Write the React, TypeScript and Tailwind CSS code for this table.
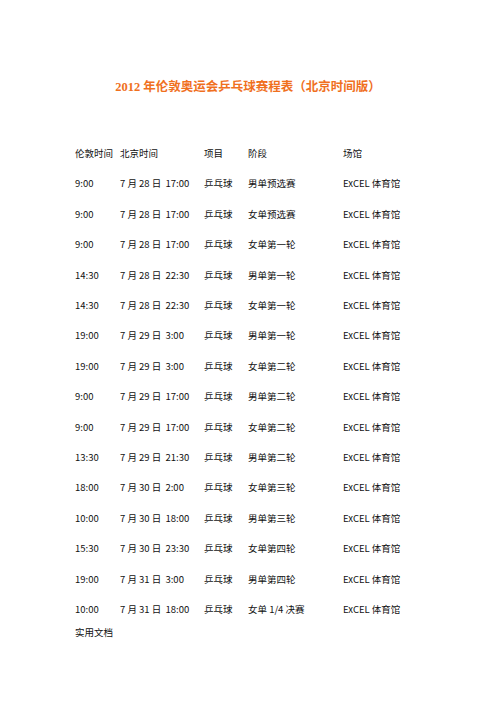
const rows = [
  ['9:00', '7 月 28 日  17:00', '乒乓球', '男单预选赛', 'ExCEL 体育馆'],
  ['9:00', '7 月 28 日  17:00', '乒乓球', '女单预选赛', 'ExCEL 体育馆'],
  ['9:00', '7 月 28 日  17:00', '乒乓球', '女单第一轮', 'ExCEL 体育馆'],
  ['14:30', '7 月 28 日  22:30', '乒乓球', '男单第一轮', 'ExCEL 体育馆'],
  ['14:30', '7 月 28 日  22:30', '乒乓球', '女单第一轮', 'ExCEL 体育馆'],
  ['19:00', '7 月 29 日  3:00', '乒乓球', '男单第一轮', 'ExCEL 体育馆'],
  ['19:00', '7 月 29 日  3:00', '乒乓球', '女单第二轮', 'ExCEL 体育馆'],
  ['9:00', '7 月 29 日  17:00', '乒乓球', '男单第二轮', 'ExCEL 体育馆'],
  ['9:00', '7 月 29 日  17:00', '乒乓球', '女单第二轮', 'ExCEL 体育馆'],
  ['13:30', '7 月 29 日  21:30', '乒乓球', '男单第二轮', 'ExCEL 体育馆'],
  ['18:00', '7 月 30 日  2:00', '乒乓球', '女单第三轮', 'ExCEL 体育馆'],
  ['10:00', '7 月 30 日  18:00', '乒乓球', '男单第三轮', 'ExCEL 体育馆'],
  ['15:30', '7 月 30 日  23:30', '乒乓球', '女单第四轮', 'ExCEL 体育馆'],
  ['19:00', '7 月 31 日  3:00', '乒乓球', '男单第四轮', 'ExCEL 体育馆'],
  ['10:00', '7 月 31 日  18:00', '乒乓球', '女单 1/4 决赛', 'ExCEL 体育馆'],
]

function Row({ cells }: { cells: string[] }) {
  return (
    <div className="flex items-center h-[30.4px] whitespace-pre">
      <span className="w-[45px]">{cells[0]}</span>
      <span className="w-[84px]">{cells[1]}</span>
      <span className="w-[44px]">{cells[2]}</span>
      <span className="w-[95px]">{cells[3]}</span>
      <span>{cells[4]}</span>
    </div>
  )
}

export default function App() {
  return (
    <div className="w-[496px] h-[702px] bg-white overflow-hidden">
      <h1 className="pt-[79px] text-center text-[12.5px] font-bold text-[#f0701e] leading-[16px] font-['Liberation_Serif','Noto_Sans_CJK_SC',serif]">
        2012 年伦敦奥运会乒乓球赛程表（北京时间版）
      </h1>
      <div className="mt-[43px] pl-[75px] text-[9.5px] text-[#111] font-['Noto_Sans_CJK_SC',sans-serif]">
        <Row cells={['伦敦时间', '北京时间', '项目', '阶段', '场馆']} />
        {rows.map((r, i) => (
          <Row key={i} cells={r} />
        ))}
        <div className="mt-[1px] leading-[14px]">实用文档</div>
      </div>
    </div>
  )
}
